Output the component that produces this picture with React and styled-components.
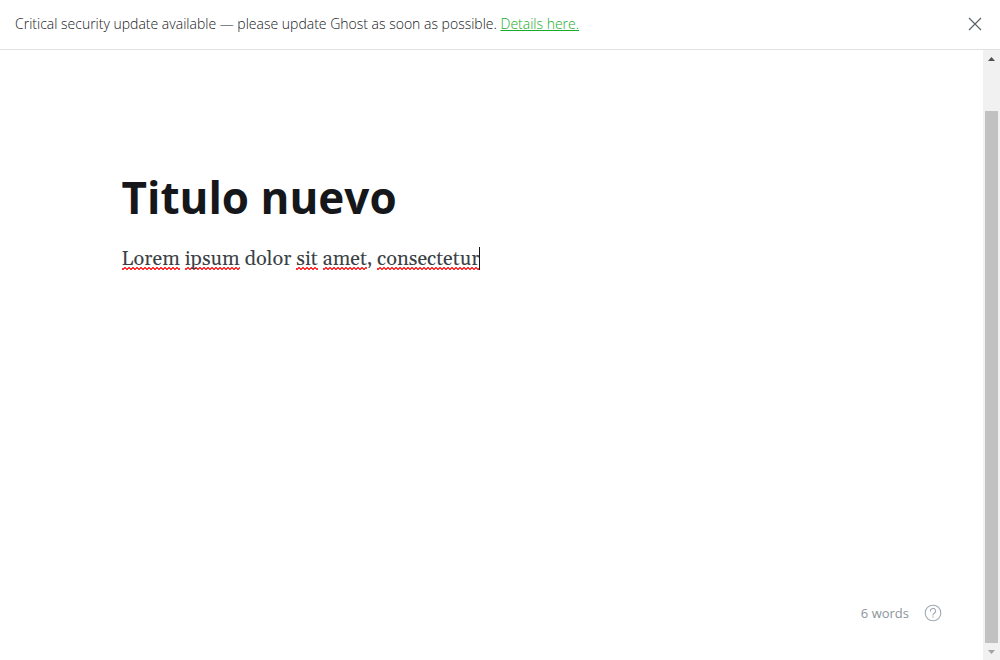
import React from "react";
import styled, { createGlobalStyle } from "styled-components";

const GlobalStyle = createGlobalStyle`
  *, *::before, *::after { box-sizing: border-box; }
  body {
    margin: 0;
    background: #fff;
    color: #3a4145;
    font-family: "Open Sans", "Noto Sans", sans-serif;
  }
`;

const Page = styled.div`
  display: flex;
  flex-direction: column;
  height: 100vh;
`;

const Alert = styled.aside`
  display: flex;
  align-items: center;
  justify-content: space-between;
  min-height: 50px;
  padding: 0 16px 2px 15px;
  border-bottom: 1px solid #dfe1e3;
  color: #15171a;
  font-size: 14px;
  font-weight: 300;
  line-height: 20px;
`;

const AlertLink = styled.a`
  color: #16ac2a;
  text-decoration: underline;
`;

const CloseButton = styled.button`
  display: flex;
  padding: 0;
  border: 0;
  background: none;
  cursor: pointer;
`;

const Workspace = styled.div`
  display: flex;
  flex: 1;
  min-height: 0;
`;

const Editor = styled.main`
  display: flex;
  flex: 1;
  flex-direction: column;
  min-width: 0;
`;

const Document = styled.article`
  flex: 1;
  width: 100%;
  max-width: 740px;
  margin: 0 auto;
  padding-top: 114px;
`;

const TitleInput = styled.input`
  display: block;
  width: 100%;
  height: 66px;
  padding: 0;
  border: 0;
  outline: 0;
  background: none;
  color: #15171a;
  font-family: inherit;
  font-size: 44px;
  font-weight: 700;
`;

const Body = styled.p`
  margin: 12px 0 0;
  font-family: Georgia, Gelasio, "Liberation Serif", serif;
  font-size: 20px;
  line-height: 34px;
`;

const Misspelled = styled.span`
  background:
    linear-gradient(135deg, transparent 35%, #f33 35% 65%, transparent 65%) 0 calc(100% - 2px) / 4px 3px repeat-x,
    linear-gradient(45deg, transparent 35%, #f33 35% 65%, transparent 65%) 2px calc(100% - 2px) / 4px 3px repeat-x;
`;

const Caret = styled.span`
  display: inline-block;
  width: 1px;
  height: 23px;
  background: #15171a;
  vertical-align: -5px;
`;

const Status = styled.footer`
  display: flex;
  align-items: center;
  justify-content: flex-end;
  gap: 15px;
  padding: 0 41px 38px 0;
  color: #8b959c;
  font-size: 13px;
  line-height: 18px;
`;

const HelpLink = styled.a`
  display: flex;
  color: #9faab4;
`;

const Scrollbar = styled.div`
  display: flex;
  flex-direction: column;
  width: 17px;
  background: #f1f1f1;
`;

const ScrollArrow = styled.button`
  display: flex;
  align-items: center;
  justify-content: center;
  height: 17px;
  padding: 0;
  border: 0;
  background: none;
  color: ${(p) => p.$color};
`;

const ScrollTrack = styled.div`
  flex: 1;
  padding: 44px 2px 0;
`;

const ScrollThumb = styled.div`
  height: 100%;
  background: #c1c1c1;
`;

export default function App() {
  return (
    <Page>
      <GlobalStyle />
      <Alert>
        <span>
          Critical security update available — please update Ghost as soon as possible.{" "}
          <AlertLink href="#details">Details here.</AlertLink>
        </span>
        <CloseButton type="button" aria-label="Close">
          <svg width="18" height="14" viewBox="0 0 18 14" fill="none" stroke="#5b6268" strokeWidth="1.2">
            <path d="M3 1l12 12M15 1l-12 12" />
          </svg>
        </CloseButton>
      </Alert>
      <Workspace>
        <Editor>
          <Document>
            <TitleInput aria-label="Post title" defaultValue="Titulo nuevo" spellCheck={false} />
            <Body>
              <Misspelled>Lorem</Misspelled> <Misspelled>ipsum</Misspelled> dolor{" "}
              <Misspelled>sit</Misspelled> <Misspelled>amet</Misspelled>,{" "}
              <Misspelled>consectetur</Misspelled>
              <Caret />
            </Body>
          </Document>
          <Status>
            <span>6 words</span>
            <HelpLink href="#help" aria-label="Help">
              <svg width="18" height="18" viewBox="0 0 18 18" fill="none" stroke="currentColor" strokeWidth="1.1">
                <circle cx="9" cy="9" r="7.8" />
                <path d="M6.4 7.1a2.6 2.6 0 1 1 3.8 2.2c-.8.5-1.2.9-1.2 1.8" strokeLinecap="round" />
                <circle cx="9" cy="13" r=".7" fill="currentColor" stroke="none" />
              </svg>
            </HelpLink>
          </Status>
        </Editor>
        <Scrollbar>
          <ScrollArrow type="button" aria-label="Scroll up" $color="#505050">
            <svg width="7" height="4" viewBox="0 0 7 4" fill="currentColor"><path d="M0 4l3.5-4 3.5 4z" /></svg>
          </ScrollArrow>
          <ScrollTrack>
            <ScrollThumb />
          </ScrollTrack>
          <ScrollArrow type="button" aria-label="Scroll down" $color="#a3a3a3">
            <svg width="7" height="4" viewBox="0 0 7 4" fill="currentColor"><path d="M0 0l3.5 4 3.5-4z" /></svg>
          </ScrollArrow>
        </Scrollbar>
      </Workspace>
    </Page>
  );
}
